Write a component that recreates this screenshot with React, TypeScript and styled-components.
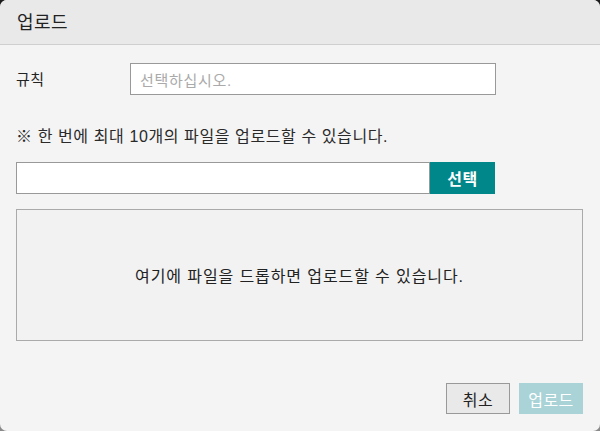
import styled, { createGlobalStyle } from "styled-components";

const GlobalStyle = createGlobalStyle`
  html, body {
    margin: 0;
    padding: 0;
    height: 431px;
    background: linear-gradient(#1c1c1c, #8a8a8a);
  }
  #root {
    height: 431px;
  }
`;

const FONT = `"Liberation Sans", "Noto Sans CJK KR", sans-serif`;

const App = () => {
  return (
    <>
      <GlobalStyle />
      <Dialog>
        <Header>
          <Title>업로드</Title>
        </Header>
        <Body>
          <RuleRow>
            <Label>규칙</Label>
            <Select>선택하십시오.</Select>
          </RuleRow>
          <Notice>※ 한 번에 최대 10개의 파일을 업로드할 수 있습니다.</Notice>
          <FileRow>
            <FileInput />
            <PickButton>선택</PickButton>
          </FileRow>
          <DropZone>여기에 파일을 드롭하면 업로드할 수 있습니다.</DropZone>
        </Body>
        <Footer>
          <Button>취소</Button>
          <Button primary disabled>
            업로드
          </Button>
        </Footer>
      </Dialog>
    </>
  );
};

export default App;

const Dialog = styled.div`
  height: 431px;
  width: 600px;
  box-sizing: border-box;
  display: flex;
  flex-direction: column;
  background: #f4f4f4;
  border-radius: 7px;
  overflow: hidden;
  font-family: ${FONT};
  color: #333;
`;

const Header = styled.div`
  height: 45px;
  box-sizing: border-box;
  display: flex;
  align-items: center;
  padding: 0 17px;
  background: #e9e9e9;
  border-bottom: 1px solid #cfcfcf;
`;

const Title = styled.div`
  font-size: 18px;
  letter-spacing: 0.5px;
  color: #222;
  margin-top: -2px;
`;

const Body = styled.div`
  flex: 1;
  padding: 18px 17px 0 16px;
  display: flex;
  flex-direction: column;
`;

const RuleRow = styled.div`
  display: flex;
  align-items: center;
  height: 32px;
`;

const Label = styled.div`
  width: 114px;
  font-size: 15px;
  letter-spacing: 0.5px;
  color: #222;
  margin-top: -2px;
`;

const Select = styled.div`
  width: 366px;
  height: 32px;
  box-sizing: border-box;
  border: 1px solid #999;
  background: #fff;
  padding: 0 9px;
  display: flex;
  align-items: center;
  font-size: 15px;
  letter-spacing: 0.7px;
  color: #aaa;
`;

const Notice = styled.div`
  margin-top: 31px;
  font-size: 16px;
  letter-spacing: 0.6px;
  color: #2a2a2a;
  line-height: 22px;
`;

const FileRow = styled.div`
  display: flex;
  margin-top: 14px;
  height: 32px;
`;

const FileInput = styled.div`
  width: 414px;
  box-sizing: border-box;
  border: 1px solid #999;
  background: #fff;
`;

const PickButton = styled.div`
  width: 65px;
  background: #00878a;
  color: #fff;
  font-weight: bold;
  font-size: 16px;
  letter-spacing: 0.5px;
  display: flex;
  align-items: center;
  justify-content: center;
`;

const DropZone = styled.div`
  margin-top: 15px;
  height: 132px;
  box-sizing: border-box;
  border: 1px solid #aaa;
  background: #f2f2f2;
  display: flex;
  align-items: center;
  justify-content: center;
  font-size: 16px;
  letter-spacing: 0.9px;
  color: #222;
`;

const Footer = styled.div`
  display: flex;
  justify-content: flex-end;
  gap: 9px;
  padding: 0 17px 17px 0;
`;

const Button = styled.button<{ primary?: boolean }>`
  width: 64px;
  height: 31px;
  box-sizing: border-box;
  font-family: ${FONT};
  font-size: 16px;
  letter-spacing: 0.5px;
  padding: 0;
  cursor: pointer;
  border: ${({ primary }) => (primary ? "none" : "1px solid #999")};
  background: ${({ primary }) => (primary ? "#a9d3d6" : "#e9e9e9")};
  color: ${({ primary }) => (primary ? "#fff" : "#222")};
`;
